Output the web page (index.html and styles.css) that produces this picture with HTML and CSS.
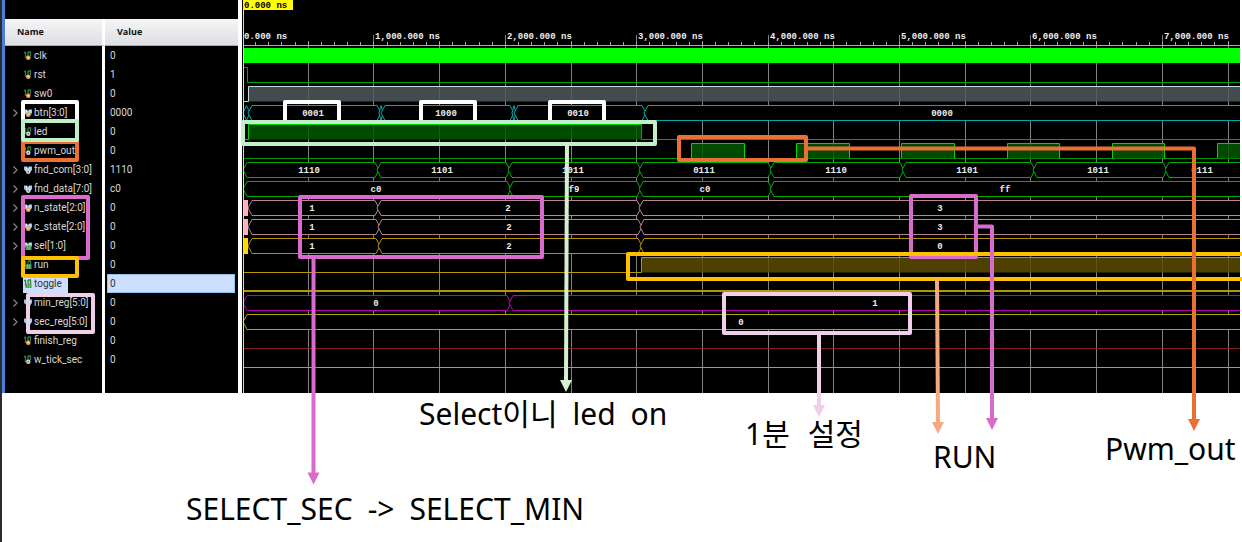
FILE: index.html
```html
<!DOCTYPE html>
<html lang="ko">
<head>
<meta charset="utf-8">
<title>Waveform</title>
<link rel="stylesheet" href="styles.css">
</head>
<body>
<svg class="defs" width="0" height="0" aria-hidden="true">
  <symbol id="bit" viewBox="0 0 10 10">
    <path d="M1 1.5h1.5v5.5M5 1h2.5v4M5 1v4.500" fill="none" stroke="#3c7a48" stroke-width="1.300"/>
  </symbol>
  <symbol id="bus" viewBox="0 0 10 10">
    <path d="M1 1.500h3l1 1.500 1-1.500h3v3.500L7 7.500H4L1 5z" fill="#9cc4dc"/>
    <path d="M3.500 2v2.500M7 2v2.500" stroke="#e4f1f8" stroke-width="1"/>
  </symbol>
  <symbol id="in" viewBox="0 0 10 10"><circle cx="5.300" cy="6.700" r="2.300" fill="#f5a742"/><circle cx="5.300" cy="6.500" r=".8" fill="#ffe0a8"/></symbol>
  <symbol id="out" viewBox="0 0 10 10"><circle cx="5.300" cy="6.700" r="2.200" fill="#d8dcdc"/><circle cx="5.300" cy="6.700" r=".8" fill="#555"/></symbol>
  <symbol id="reg" viewBox="0 0 10 10"><path d="M2.500 4.500h6v4.500h-6z" fill="#4b9b54"/><path d="M4.500 4v5M6.500 4v5" stroke="#8cc990" stroke-width=".6"/></symbol>
</svg>
<main class="slide">
  <section class="viewer">
    <table class="signals">
      <thead><tr><th scope="col">Name</th><th scope="col">Value</th></tr></thead>
      <tbody id="rows"></tbody>
      <tfoot><tr><td></td><td></td></tr></tfoot>
    </table>
    <svg class="wave" id="wave" role="img" aria-label="Simulation waveform"></svg>
  </section>
  <svg class="marks" aria-hidden="true">
    <g class="box">
      <rect class="white" x="23" y="102" width="54" height="19"/>
      <rect class="white" x="285" y="102" width="54" height="20"/>
      <rect class="white" x="421" y="102" width="54" height="20"/>
      <rect class="white" x="550" y="102" width="54" height="20"/>
      <rect class="orange" x="23" y="142" width="54" height="18"/>
      <rect class="mint" x="23" y="121" width="54" height="19"/>
      <rect class="mint" x="243" y="122" width="412" height="22"/>
      <rect class="orange" x="679" y="137" width="127" height="23"/>
      <rect class="orchid" x="23" y="197" width="65" height="61"/>
      <rect class="orchid" x="300" y="197" width="242" height="60"/>
      <rect class="orchid" x="911" y="196" width="65" height="61"/>
      <rect class="gold" x="23" y="258" width="54" height="18"/>
      <path class="gold" d="M3000 254H628V279H3000"/>
      <rect class="blush" x="28" y="295" width="65" height="37"/>
      <rect class="blush" x="724" y="294" width="186" height="39"/>
      <path class="orchid" d="M313.500 258V474M976 226.500H992V420"/>
      <path class="orange" d="M808 148.500H1194V421"/>
      <path class="blush" d="M819 334V407"/>
      <path class="leaf" d="M567 142L566 382"/>
      <path class="peach" d="M937 279L938 423"/>
    </g>
    <path fill="#d86bcb" d="M307.500 472.500h12l-6 12zM986 418h12l-6 12z"/>
    <path fill="#eb7033" d="M1188 419h12l-6 12z"/>
    <path fill="#f0cfeb" d="M813 405h12l-6 12z"/>
    <path fill="#d5efcf" d="M560 380h12l-6 12z"/>
    <path fill="#f3aa83" d="M932 422h12l-6 12z"/>
  </svg>
  <p class="note note-led"><span>Select이니</span> <span>led</span> <span>on</span></p>
  <p class="note note-minute"><span>1분</span> <span>설정</span></p>
  <p class="note note-run">RUN</p>
  <p class="note note-pwm">Pwm_out</p>
  <p class="note note-select"><span>SELECT_SEC</span> <span>-&gt;</span> <span>SELECT_MIN</span></p>
</main>
<script src="app.js"></script>
</body>
</html>
```
FILE: styles.css
```css
* { box-sizing: border-box; }
body { margin: 0; background: #fff; }
.defs { position: absolute; }
.slide { position: relative; min-height: 100vh; overflow: hidden; border-left: 2px solid #2b2c31; }
.viewer { display: flex; align-items: flex-start; padding-right: 2px; background: #fff; border-left: 3px solid #4a7fd8; }
.signals {
  flex: none; width: 233px; table-layout: fixed;
  border-collapse: separate; border-spacing: 0;
  border-top: 19px solid #000; background: #000;
  font: 10px/18px Roboto, "Noto Sans", sans-serif; color: #d8d8d8;
}
.signals th, .signals td { padding: 0; text-align: left; white-space: nowrap; }
.signals th:first-child, .signals td:first-child { width: 100px; border-right: 3px solid #fff; }
.signals th {
  height: 27px; padding-left: 12px; color: #111; font-family: "Open Sans", sans-serif; font-size: 9px; font-weight: 700;
  background: linear-gradient(#f5f5f6, #dedfe3); border-bottom: 1px solid #aaa;
}
.signals tbody tr { height: 19px; }
.signals tfoot tr { height: 24px; }
.signals tbody td:last-child { padding-left: 2px; }
.cell { display: flex; align-items: center; height: 19px; padding-left: 6px; }
.chevron { width: 12px; height: 18px; padding: 0; border: 0; background: none; flex: none; }
.chevron svg { display: block; width: 7px; height: 10px; margin-left: 1px; }
.spacer { width: 12px; flex: none; }
.label { display: flex; align-items: center; height: 18px; padding-right: 6px; }
.icon { width: 10px; height: 10px; margin-right: 1px; }
.value { display: block; height: 19px; margin-right: 3px; padding-left: 3px; line-height: 19px; }
.selected .label { background: #cddfff; color: #333; }
.selected .value { background: #cddfff; color: #333; border: 1px solid #8fc3e8; padding-left: 2px; line-height: 17px; }
.wave {
  flex: 1; min-width: 0; height: 393px; display: block; background: #000;
  border-left: 4px solid #fff;
  font: 700 9px "Liberation Mono", monospace; fill: #eee;
}
.marks { position: absolute; left: -2px; top: 0; width: calc(100% + 2px); height: 100%; }
.box { fill: none; stroke-width: 4; stroke-linejoin: round; }
.white { stroke: #fff; }
.orange { stroke: #eb7033; }
.mint { stroke: #c0efc9; }
.orchid { stroke: #d86bcb; }
.gold { stroke: #ffc000; }
.blush { stroke: #f0cfeb; }
.leaf { stroke: #d5efcf; }
.peach { stroke: #f3aa83; }
.note {
  position: absolute; display: flex; gap: 15px; margin: 0; white-space: nowrap; color: #000;
  font: 30px/40px "Noto Sans", "Noto Sans CJK KR", sans-serif;
}
.note-led { left: 417px; top: 394px; }
.note-minute { left: 743px; top: 414px; gap: 18px; }
.note-run { left: 931px; top: 437px; }
.note-pwm { left: 1103px; top: 429px; }
.note-select { left: 184px; top: 489px; }
```
FILE: app.js
```js
const signals = [
  ['clk', '0', 'bit', 'in'], ['rst', '1', 'bit', 'in'], ['sw0', '0', 'bit', 'in'],
  ['btn[3:0]', '0000', 'bus', 'in'], ['led', '0', 'bit', 'out'], ['pwm_out', '0', 'bit', 'out'],
  ['fnd_com[3:0]', '1110', 'bus', 'out'], ['fnd_data[7:0]', 'c0', 'bus', 'out'],
  ['n_state[2:0]', '0', 'bus', 'in'], ['c_state[2:0]', '0', 'bus', 'in'], ['sel[1:0]', '0', 'bus', 'reg'],
  ['run', '0', 'bit', 'reg'], ['toggle', '0', 'bit', 'reg'],
  ['min_reg[5:0]', '0', 'bus', 'out'], ['sec_reg[5:0]', '0', 'bus', 'out'],
  ['finish_reg', '0', 'bit', 'in'], ['w_tick_sec', '0', 'bit', 'out']
];
const chevron = name => `<button class="chevron" type="button" aria-label="Expand ${name}"><svg viewBox="0 0 7 10"><path d="M1.500 1.500l3.500 3.500L1.500 8.500" fill="none" stroke="#888" stroke-width="1.200"/></svg></button>`;
document.getElementById('rows').innerHTML = signals.map(([name, value, kind, dir]) =>
  `<tr${name === 'toggle' ? ' class="selected"' : ''}><td><div class="cell">${kind === 'bus' ? chevron(name) : '<span class="spacer"></span>'}<span class="label"><svg class="icon"><use href="#${kind}"/><use href="#${dir}"/></svg>${name}</span></div></td><td><span class="value">${value}</span></td></tr>`
).join('');

const START = 243, END = 3000, NS = 131.4;
const out = [];
const rowTop = r => 48.5 + 19 * r;
const line = (d, c, w = 1) => out.push(`<path d="${d}" fill="none" stroke="${c}" stroke-width="${w}"/>`);
const area = (x1, x2, r, c) => out.push(`<rect x="${x1}" y="${rowTop(r)}" width="${x2 - x1}" height="15" fill="${c}" fill-opacity=".85"/>`);
const label = (x, y, s, extra = 'text-anchor="middle"') => out.push(`<text x="${x}" y="${y}" ${extra}>${s}</text>`);

// Ruler and grid
for (let i = 1; i < 30; i++) {
  const x = Math.round(START + i * NS / 2) - 1;
  line(`M${x + 0.5} ${i % 2 ? 41 : 35}V393`, '#808080');
}
for (let i = 1; i < 150; i++) line(`M${Math.round(START + i * NS / 10) - 0.5} 42V45`, '#aaa');
line(`M${START} 45.5H${END}`, '#aaa');
for (let k = 0; k < 8; k++) {
  label(Math.round(START + k * NS) + 1, 39, `${k ? k + ',000' : '0'}.000 ns`, '');
}

// Single-bit signals
out.push(`<rect x="${START}" y="48" width="${END}" height="15" fill="#0f0"/>`);
line(`M${START} 67.5H247.500V82.500H${END}`, '#00a800');
area(248, END, 2, '#4e585a');
line(`M${START} 101.500H248.500V86.500H${END}`, '#c5dddd');
area(248, 642, 4, '#005800');
line(`M${START} 139.500H248.500V124.500H642`, '#00d000');
line(`M641.500 124V139.500H${END}`, '#00a800');
line(`M${START} 158.500H${END}`, '#009800');
[[691, 744], [796, 849], [901, 954], [1007, 1059], [1112, 1164], [1217, 1270]].forEach(([a, b]) => {
  area(a, b, 5, '#005800');
  line(`M${a + 0.5} 158.500V143.500H${b + 0.5}V158.500`, '#00d800');
});
area(642, END, 11, '#5a4b00');
line(`M${START} 272.500H641.500V257.500H${END}`, '#b89600');
line(`M${START} 291H${END}`, '#b89600', 2);
line(`M${START} 348.500H${END}`, '#8c1f22');
line(`M${START} 367.500H${END}`, '#999');

// Buses: row, line colour, transition positions, [x, value] pairs
const bus = (r, c, edges, values) => {
  const t = rowTop(r), b = t + 15, m = t + 7.5;
  edges.forEach((a, i) => {
    const e = edges[i + 1] || END;
    const k = Math.min(3, (e - a) / 2);
    out.push(`<path d="M${a - 1} ${m}L${a + k} ${t}H${e - k}L${e + 1} ${m}L${e - k} ${b}H${a + k}Z" fill="#000" stroke="${c}"/>`);
  });
  values.forEach(([x, s]) => label(x, m + 2.5, s));
};
bus(3, '#00a8ac', [244, 249, 380, 382, 513, 515, 645], [[313, '0001'], [446, '1000'], [578, '0010'], [942, '0000']]);
bus(6, '#00b000', [244, 378, 509, 640, 771, 903, 1034, 1166],
  [[309, '1110'], [442, '1101'], [573, '1011'], [704, '0111'], [836, '1110'], [967, '1101'], [1098, '1011'], [1202, '0111']]);
bus(7, '#00b000', [244, 510, 640, 771], [[376, 'c0'], [574, 'f9'], [705, 'c0'], [1005, 'ff']]);
bus(8, '#b88490', [249, 378, 640], [[312, '1'], [508, '2'], [940, '3']]);
bus(9, '#b88490', [249, 379, 641], [[312, '1'], [509, '2'], [940, '3']]);
bus(10, '#b09000', [249, 379, 641], [[312, '1'], [509, '2'], [940, '0']]);
bus(13, '#b800b8', [244, 510], [[376, '0'], [875, '1']]);
bus(14, '#a8a800', [244], [[741, '0']]);
out.push('<path d="M244 200h4v16h-4zM244 219h4v16h-4z" fill="#ffb0bc"/><path d="M244 238h4v16h-4z" fill="#ffd800"/>');

// Time cursor
line('M243.500 0V393', '#f4f400');
out.push('<rect x="243" y="0" width="50" height="10" fill="#ff0"/>');
label(244, 8, '0.000 ns', 'fill="#000"');

// The plotting area begins at x = 242 in the coordinates above
document.getElementById('wave').innerHTML = `<g transform="translate(-242 0)">${out.join('')}</g>`;
```
